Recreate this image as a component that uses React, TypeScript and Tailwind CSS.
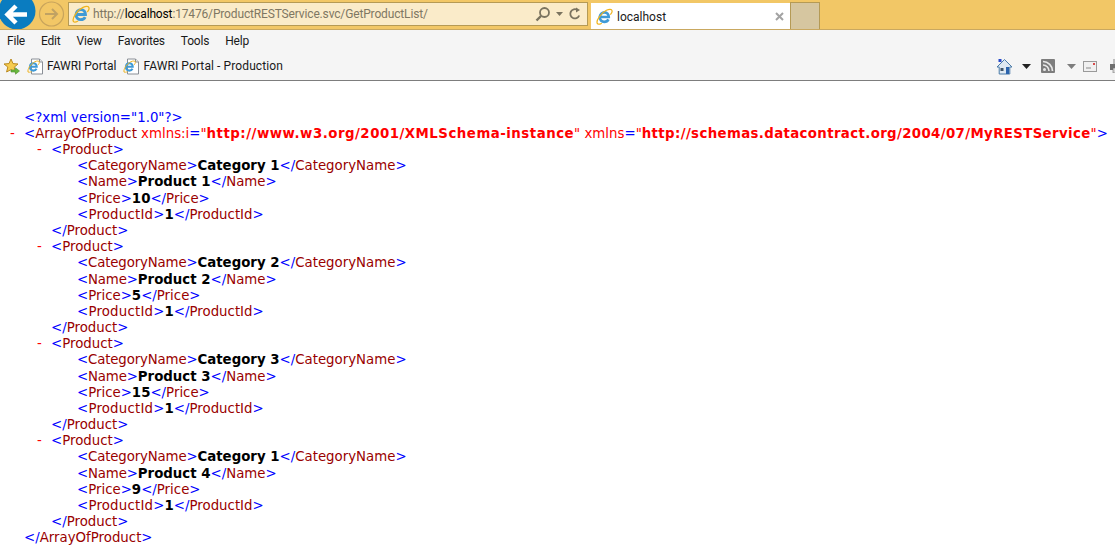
import React from 'react';

type Attr = { k: string; v: string; track: string };

const IeIcon = ({ size = 18 }: { size?: number }) => (
  <svg width={size} height={size} viewBox="0 0 18 18" className="shrink-0">
    <path d="M4 9.500h9.500C13.500 6.500 11.600 4.600 9 4.600 6.400 4.600 4.200 6.800 4 9.500c-.2 3 2 5.200 4.800 5.200 2 0 3.600-1 4.400-2.600" fill="none" stroke="#3f9ad6" strokeWidth="2.800" />
    <path d="M1.500 16.500C-.5 13.500 5.500 5 11 2.400c3-1.400 5.600-1.400 6 .4.3 1.200-.6 2.800-1.400 3.800" fill="none" stroke="#efb31c" strokeWidth="1.300" strokeLinecap="round" />
    <path d="M1.500 16.500c.8 1 2.600.6 4.200-.2" fill="none" stroke="#efb31c" strokeWidth="1.200" strokeLinecap="round" />
  </svg>
);

const PageIcon = () => (
  <span className="relative flex h-[17px] w-[17px] shrink-0 items-center justify-center">
    <svg width="17" height="17" viewBox="0 0 17 17" className="absolute left-0 top-0">
      <path d="M4.500 1h8l3 3v12h-11z" fill="#fff" stroke="#8a8f96" />
      <path d="M12.500 1v3h3" fill="#e6e8ea" stroke="#8a8f96" />
    </svg>
    <span className="absolute left-0 top-[2px]">
      <IeIcon size={13} />
    </span>
  </span>
);

const Caret = ({ color }: { color: string }) => (
  <svg width="9" height="5" viewBox="0 0 9 5" className="block">
    <path d="M0 0h9L4.500 5z" fill={color} />
  </svg>
);

function Toolbar() {
  return (
    <div className="font-['Roboto','Open_Sans',sans-serif]">
      <div className="flex h-[30px] items-start overflow-hidden border-b border-[#c9a860] bg-[#f2c766]">
        <svg width="66" height="29" viewBox="0 0 66 29" className="shrink-0">
          <circle cx="17" cy="11" r="18.500" fill="#0a7cc0" />
          <path d="M8 14.500h19M16 6l-8.500 8.500 8.500 8.500" fill="none" stroke="#fff" strokeWidth="4.500" />
          <circle cx="51.500" cy="14" r="12" fill="#f2c766" stroke="#c8a45c" strokeWidth="1.200" />
          <path d="M45 14h12M52 9l5 5-5 5" fill="none" stroke="#c0a263" strokeWidth="2" />
        </svg>
        <div className="ml-[2px] mt-[2px] flex h-[24px] w-[520px] items-center border border-[#b59a55] bg-[#faebc9] pl-[3px] pr-[5px]">
          <IeIcon size={18} />
          <span className="ml-[3px] whitespace-nowrap text-[12px] tracking-[-0.15px] text-[#7f7763]">
            http://<span className="text-black">localhost</span>:17476/ProductRESTService.svc/GetProductList/
          </span>
          <div className="ml-auto flex items-center">
            <svg width="16" height="16" viewBox="0 0 16 16">
              <circle cx="9.500" cy="6.500" r="4.500" fill="none" stroke="#7a735f" strokeWidth="1.800" />
              <path d="M6 10l-4.500 4.500" stroke="#7a735f" strokeWidth="2.400" />
            </svg>
            <span className="ml-[5px]"><svg width="7" height="4" viewBox="0 0 7 4" className="block"><path d="M0 0h7L3.500 4z" fill="#7a735f" /></svg></span>
            <svg width="14" height="14" viewBox="0 0 14 14" className="ml-[5px]">
              <path d="M11.200 8.500A4.600 4.600 0 1 1 9.500 3" fill="none" stroke="#7a735f" strokeWidth="1.800" />
              <path d="M8 .5l4 2.600-4 2.400z" fill="#7a735f" />
            </svg>
          </div>
        </div>
        <div className="ml-[3px] mt-[3px] flex h-[27px] w-[199px] items-center bg-white pl-[5px] pr-[5px]">
          <IeIcon size={17} />
          <span className="ml-[4px] text-[12px] text-[#1a1a1a]">localhost</span>
          <svg width="9" height="9" viewBox="0 0 9 9" className="ml-auto mr-[1px]">
            <path d="M1 1l7 7M8 1l-7 7" stroke="#a3a3a3" strokeWidth="2" />
          </svg>
        </div>
        <div className="mt-[2px] h-[28px] w-[30px] border border-b-0 border-[#b59a55] bg-[#d6c6a0]" />
      </div>
      <div className="flex h-[23px] items-center gap-[16px] bg-[#f5f5f5] pb-[2px] pl-[7px] text-[12px] tracking-[-0.2px] text-[#1a1a1a]">
        <span>File</span>
        <span>Edit</span>
        <span>View</span>
        <span>Favorites</span>
        <span>Tools</span>
        <span>Help</span>
      </div>
      <div className="flex h-[28px] items-center border-b border-[#7d7d7d] bg-[#f5f5f5] pb-[1px] text-[12px] text-[#1a1a1a]">
        <svg width="17" height="17" viewBox="0 0 17 17" className="ml-[3px] shrink-0">
          <path d="M8 1l2 4.600 5 .4-3.800 3.200 1.200 5-4.400-2.600L3.600 14l1.200-5L1 6l5-.4z" fill="#f6cc4e" stroke="#b98a22" />
          <path d="M8 12h4.500v-2.200l4 3.200-4 3.200V14H8z" fill="#69b93f" stroke="#4c8f2d" strokeWidth=".6" />
        </svg>
        <span className="ml-[7px]"><PageIcon /></span>
        <span className="ml-[3px] whitespace-nowrap">FAWRI Portal</span>
        <span className="ml-[7px]"><PageIcon /></span>
        <span className="ml-[3px] whitespace-nowrap tracking-[0.1px]">FAWRI Portal - Production</span>
        <div className="ml-auto flex items-center">
          <svg width="17" height="17" viewBox="0 0 17 17" className="shrink-0">
            <path d="M8.500 1.500L1 9h2.200v7h10.600V9H16z" fill="#dfe9f2" stroke="#4b7ba8" />
            <path d="M2.500 1h3v3h-3z" fill="#2749c9" />
            <path d="M10 9h3v7h-3z" fill="#2b63ad" />
            <path d="M4.500 10h3v3h-3z" fill="#41566b" />
          </svg>
          <span className="ml-[9px]"><Caret color="#222" /></span>
          <svg width="14" height="14" viewBox="0 0 14 14" className="ml-[10px] shrink-0">
            <rect width="14" height="14" rx="1" fill="#7d7d7d" />
            <circle cx="3.500" cy="10.500" r="1.500" fill="#e8e8e8" />
            <path d="M2 6a6 6 0 0 1 6 6M2 2.500A9.500 9.500 0 0 1 11.500 12" fill="none" stroke="#e8e8e8" strokeWidth="1.700" />
          </svg>
          <span className="ml-[12px]"><Caret color="#7d7d7d" /></span>
          <svg width="14" height="11" viewBox="0 0 14 11" className="ml-[7px] shrink-0">
            <rect x=".5" y=".5" width="13" height="10" fill="#f0f0f0" stroke="#9a9a9a" />
            <path d="M3 7h5" stroke="#8a8a8a" />
            <rect x="10" y="2" width="2" height="2" fill="#d84a4a" />
          </svg>
          <svg width="14" height="14" viewBox="0 0 14 14" className="ml-[13px] -mr-[9px] shrink-0">
            <path d="M3 0h8v5H3z" fill="#bdbdbd" />
            <path d="M0 5h14v6H0z" fill="#6f6f6f" />
            <path d="M3 9h8v5H3z" fill="#d8d8d8" stroke="#777" strokeWidth=".6" />
          </svg>
        </div>
      </div>
    </div>
  );
}

const B = ({ children }: { children: React.ReactNode }) => <span className="text-[#0000ff]">{children}</span>;
const N = ({ children }: { children: React.ReactNode }) => <span className="text-[#990000]">{children}</span>;

function Leaf({ name, value, track = '' }: { name: string; value: string; track?: string }) {
  return (
    <div className="pl-[77px]">
      <span className={track}><B>&lt;</B><N>{name}</N><B>&gt;</B></span>
      <span className="font-bold text-black">{value}</span>
      <B>&lt;/</B><N>{name}</N><B>&gt;</B>
    </div>
  );
}

function Product({ category, product, price }: { category: string; product: string; price: string }) {
  return (
    <>
      <div className="flex pl-[37px]">
        <span className="w-[14px] text-[#ff0000]">-</span>
        <span><B>&lt;</B><N>Product</N><B>&gt;</B></span>
      </div>
      <Leaf name="CategoryName" value={category} track="tracking-[-0.15px]" />
      <Leaf name="Name" value={product} track="tracking-[-0.15px]" />
      <Leaf name="Price" value={price} />
      <Leaf name="ProductId" value="1" track="tracking-[0.2px]" />
      <div className="pl-[51px]">
        <B>&lt;/</B><N>Product</N><B>&gt;</B>
      </div>
    </>
  );
}

const rootAttrs: Attr[] = [
  { k: 'xmlns:i', v: 'http://www.w3.org/2001/XMLSchema-instance', track: 'tracking-[0.5px]' },
  { k: 'xmlns', v: 'http://schemas.datacontract.org/2004/07/MyRESTService', track: 'tracking-[0.36px]' },
];

export default function App() {
  return (
    <div className="h-[546px] w-[1115px] overflow-hidden bg-white">
      <Toolbar />
      <div className="whitespace-nowrap pt-[28.8px] font-['DejaVu_Sans',sans-serif] text-[13.33px] leading-[16.17px]">
        <div className="pl-[24px]">
          <B>&lt;?xml version="1.0"?&gt;</B>
        </div>
        <div className="flex pl-[10px]">
          <span className="w-[14px] text-[#ff0000]">-</span>
          <span>
            <B>&lt;</B><N>ArrayOfProduct</N>
            {rootAttrs.map((a) => (
              <span key={a.k}>
                {' '}<span className="text-[#ff0000]">{a.k}</span><B>=</B><span className="text-[#ff0000]">"</span>
                <span className={`font-bold text-[#ff0000] ${a.track}`}>{a.v}</span><span className="text-[#ff0000]">"</span>
              </span>
            ))}
            <B>&gt;</B>
          </span>
        </div>
        <Product category="Category 1" product="Product 1" price="10" />
        <Product category="Category 2" product="Product 2" price="5" />
        <Product category="Category 3" product="Product 3" price="15" />
        <Product category="Category 1" product="Product 4" price="9" />
        <div className="pl-[24px]">
          <B>&lt;/</B><N>ArrayOfProduct</N><B>&gt;</B>
        </div>
      </div>
    </div>
  );
}
